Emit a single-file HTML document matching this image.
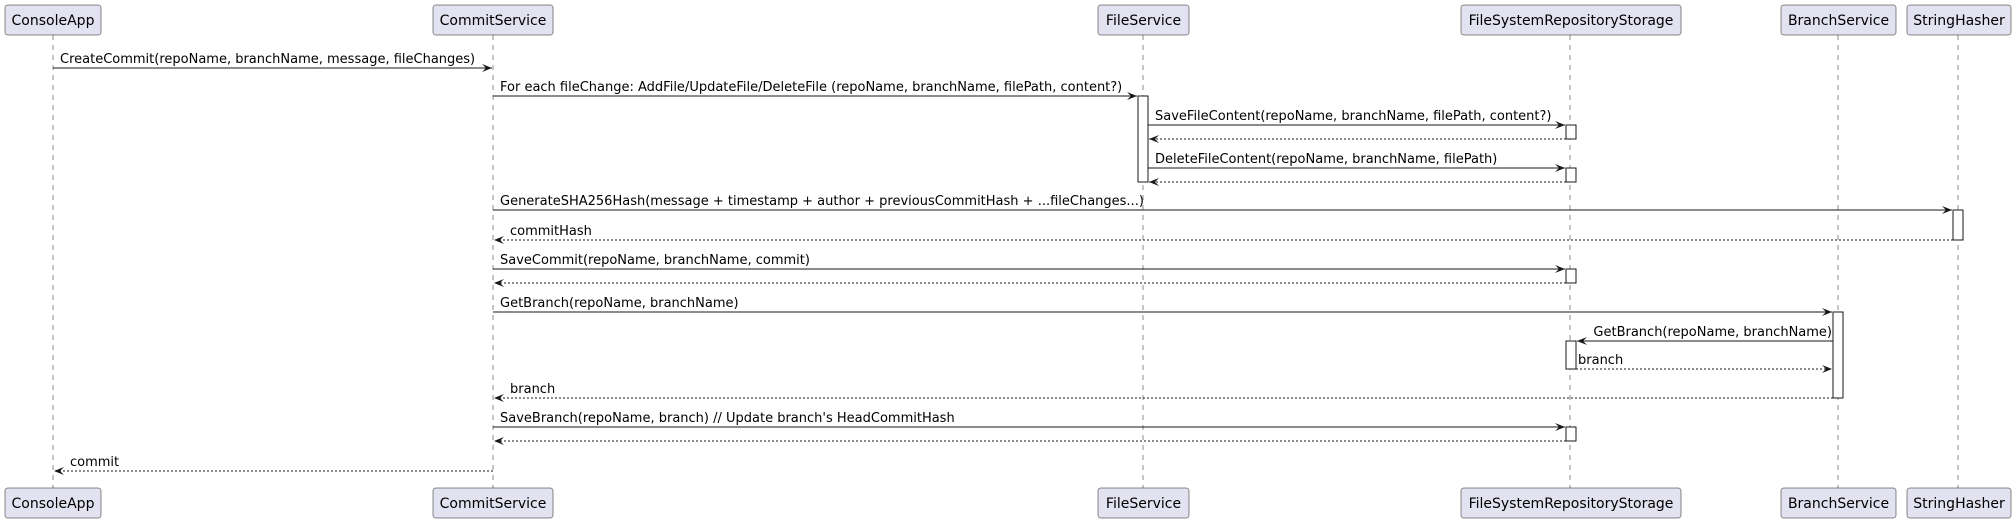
<!DOCTYPE html>
<html><head><meta charset="utf-8"><style>
html,body{margin:0;padding:0;background:#fff}
svg{display:block}
text{font-family:"DejaVu Sans","Liberation Sans",sans-serif;fill:#000}
.m{font-size:13px}
.p{font-size:14px}
</style></head><body>
<svg width="2016" height="525" viewBox="0 0 2016 525" xmlns="http://www.w3.org/2000/svg">
<g stroke="#181818" stroke-width="0.5" stroke-dasharray="5,5" fill="none">
<line x1="53" y1="35" x2="53" y2="488"/>
<line x1="493" y1="35" x2="493" y2="488"/>
<line x1="1143" y1="35" x2="1143" y2="488"/>
<line x1="1570" y1="35" x2="1570" y2="488"/>
<line x1="1838" y1="35" x2="1838" y2="488"/>
<line x1="1958" y1="35" x2="1958" y2="488"/>
</g>
<g fill="#E2E2F0" stroke="#181818" stroke-width="0.5">
<rect x="5" y="5" width="96" height="30" rx="2.5"/>
<rect x="433" y="5" width="120" height="30" rx="2.5"/>
<rect x="1098" y="5" width="91" height="30" rx="2.5"/>
<rect x="1461" y="5" width="220" height="30" rx="2.5"/>
<rect x="1781" y="5" width="115" height="30" rx="2.5"/>
<rect x="1907" y="5" width="104" height="30" rx="2.5"/>
<rect x="5" y="488" width="96" height="30" rx="2.5"/>
<rect x="433" y="488" width="120" height="30" rx="2.5"/>
<rect x="1098" y="488" width="91" height="30" rx="2.5"/>
<rect x="1461" y="488" width="220" height="30" rx="2.5"/>
<rect x="1781" y="488" width="115" height="30" rx="2.5"/>
<rect x="1907" y="488" width="104" height="30" rx="2.5"/>
</g>
<g class="p" text-anchor="middle">
<text x="53" y="25" class="p">ConsoleApp</text>
<text x="493" y="25" class="p">CommitService</text>
<text x="1143.5" y="25" class="p">FileService</text>
<text x="1571" y="25" class="p">FileSystemRepositoryStorage</text>
<text x="1838.5" y="25" class="p">BranchService</text>
<text x="1959" y="25" class="p">StringHasher</text>
<text x="53" y="508" class="p">ConsoleApp</text>
<text x="493" y="508" class="p">CommitService</text>
<text x="1143.5" y="508" class="p">FileService</text>
<text x="1571" y="508" class="p">FileSystemRepositoryStorage</text>
<text x="1838.5" y="508" class="p">BranchService</text>
<text x="1959" y="508" class="p">StringHasher</text>
</g>
<g fill="#fff" stroke="#181818" stroke-width="1">
<rect x="1138" y="96" width="10" height="86"/>
<rect x="1566" y="125" width="10" height="14"/>
<rect x="1566" y="168" width="10" height="14"/>
<rect x="1953" y="210" width="10" height="30"/>
<rect x="1566" y="269" width="10" height="14"/>
<rect x="1833" y="312" width="10" height="86"/>
<rect x="1566" y="341" width="10" height="28"/>
<rect x="1566" y="427" width="10" height="14"/>
</g>
<g stroke="#181818" stroke-width="1">
<line x1="53" y1="68" x2="492" y2="68"/>
<line x1="493" y1="96" x2="1137" y2="96"/>
<line x1="1148" y1="125" x2="1565" y2="125"/>
<line x1="1566" y1="139" x2="1149" y2="139" stroke-dasharray="2,2"/>
<line x1="1148" y1="168" x2="1565" y2="168"/>
<line x1="1566" y1="182" x2="1149" y2="182" stroke-dasharray="2,2"/>
<line x1="493" y1="210" x2="1952" y2="210"/>
<line x1="1953" y1="240" x2="494" y2="240" stroke-dasharray="2,2"/>
<line x1="493" y1="269" x2="1565" y2="269"/>
<line x1="1566" y1="283" x2="494" y2="283" stroke-dasharray="2,2"/>
<line x1="493" y1="312" x2="1832" y2="312"/>
<line x1="1833" y1="341" x2="1577" y2="341"/>
<line x1="1576" y1="369" x2="1832" y2="369" stroke-dasharray="2,2"/>
<line x1="1833" y1="398" x2="494" y2="398" stroke-dasharray="2,2"/>
<line x1="493" y1="427" x2="1565" y2="427"/>
<line x1="1566" y1="441" x2="494" y2="441" stroke-dasharray="2,2"/>
<line x1="493" y1="471" x2="54" y2="471" stroke-dasharray="2,2"/>
</g>
<g fill="#181818">
<polygon points="482,64 492,68 482,72 486,68"/>
<polygon points="1127,92 1137,96 1127,100 1131,96"/>
<polygon points="1555,121 1565,125 1555,129 1559,125"/>
<polygon points="1159,135 1149,139 1159,143 1155,139"/>
<polygon points="1555,164 1565,168 1555,172 1559,168"/>
<polygon points="1159,178 1149,182 1159,186 1155,182"/>
<polygon points="1942,206 1952,210 1942,214 1946,210"/>
<polygon points="504,236 494,240 504,244 500,240"/>
<polygon points="1555,265 1565,269 1555,273 1559,269"/>
<polygon points="504,279 494,283 504,287 500,283"/>
<polygon points="1822,308 1832,312 1822,316 1826,312"/>
<polygon points="1587,337 1577,341 1587,345 1583,341"/>
<polygon points="1822,365 1832,369 1822,373 1826,369"/>
<polygon points="504,394 494,398 504,402 500,398"/>
<polygon points="1555,423 1565,427 1555,431 1559,427"/>
<polygon points="504,437 494,441 504,445 500,441"/>
<polygon points="64,467 54,471 64,475 60,471"/>
</g>
<g class="m">
<text x="60" y="63" class="m">CreateCommit(repoName, branchName, message, fileChanges)</text>
<text x="500" y="91" class="m">For each fileChange: AddFile/UpdateFile/DeleteFile (repoName, branchName, filePath, content?)</text>
<text x="1155" y="120" class="m">SaveFileContent(repoName, branchName, filePath, content?)</text>
<text x="1155" y="163" class="m">DeleteFileContent(repoName, branchName, filePath)</text>
<text x="500" y="205" class="m">GenerateSHA256Hash(message + timestamp + author + previousCommitHash + ...fileChanges...)</text>
<text x="510" y="235" class="m">commitHash</text>
<text x="500" y="264" class="m">SaveCommit(repoName, branchName, commit)</text>
<text x="500" y="307" class="m">GetBranch(repoName, branchName)</text>
<text x="1832" y="336" class="m" text-anchor="end">GetBranch(repoName, branchName)</text>
<text x="1578" y="364" class="m">branch</text>
<text x="510" y="393" class="m">branch</text>
<text x="500" y="422" class="m">SaveBranch(repoName, branch) // Update branch's HeadCommitHash</text>
<text x="70" y="466" class="m">commit</text>
</g>
</svg>
</body></html>
